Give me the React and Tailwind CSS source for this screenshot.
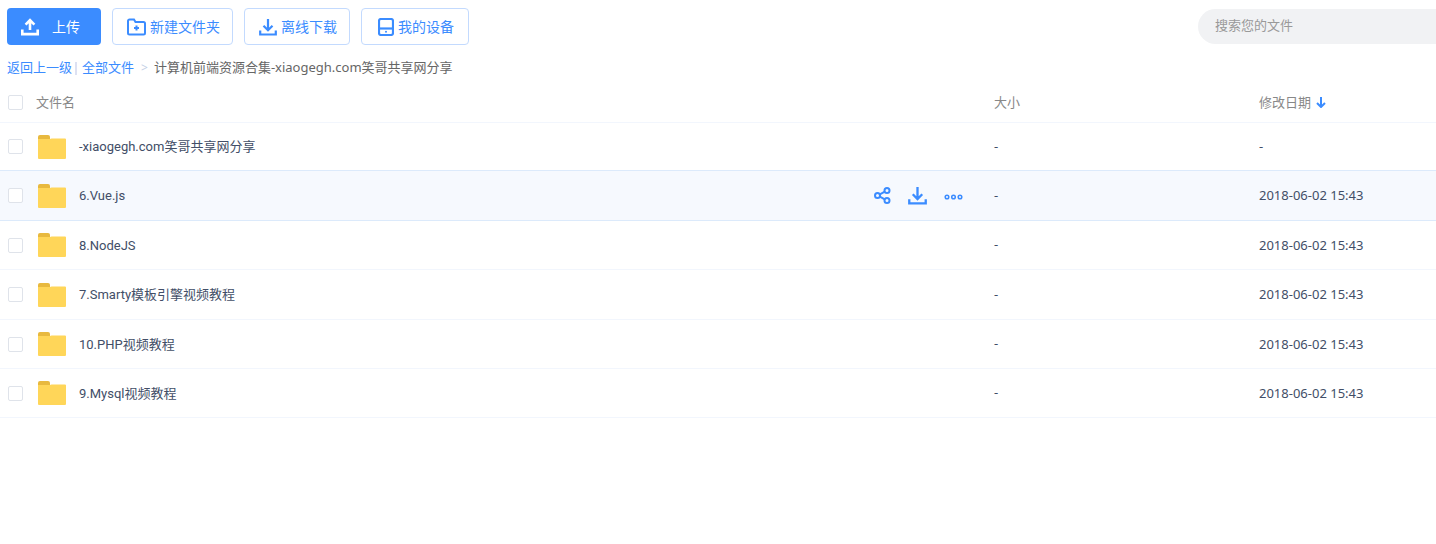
const fontStack = "font-['Noto_Sans','Noto_Sans_CJK_SC',sans-serif]";

const files = [
  { name: "-xiaogegh.com笑哥共享网分享", date: "-", height: "h-[48px]", border: "border-[#dceafb]" },
  { name: "6.Vue.js", date: "2018-06-02 15:43", height: "h-[50px]", border: "border-[#dceafb]", active: true },
  { name: "8.NodeJS", date: "2018-06-02 15:43", height: "h-[49px]", border: "border-[#f2f6fd]" },
  { name: "7.Smarty模板引擎视频教程", date: "2018-06-02 15:43", height: "h-[50px]", border: "border-[#f2f6fd]" },
  { name: "10.PHP视频教程", date: "2018-06-02 15:43", height: "h-[49px]", border: "border-[#f2f6fd]" },
  { name: "9.Mysql视频教程", date: "2018-06-02 15:43", height: "h-[49px]", border: "border-[#f2f6fd]" },
];

const UploadIcon = () => (
  <svg width="18" height="18" viewBox="0 0 18 18" fill="none" stroke="currentColor" strokeWidth="2.6">
    <path d="M9 12V2.5M4.6 6.6 9 2.2l4.4 4.4" />
    <path d="M1.3 11.5v4.6h15.4v-4.6" />
  </svg>
);

const FolderPlusIcon = () => (
  <svg width="19" height="18" viewBox="0 0 19 18" fill="none" stroke="currentColor" strokeWidth="2">
    <path d="M1 3a1.500 1.500 0 0 1 1.500-1.500H7L8.500 4h8A1.500 1.500 0 0 1 18 5.500V15a1.500 1.500 0 0 1-1.500 1.500h-14A1.500 1.500 0 0 1 1 15Z" />
    <path d="M9.500 7.500v5M7 10h5" />
  </svg>
);

const DownloadIcon = ({ size = 18 }) => (
  <svg width={size} height={size} viewBox="0 0 18 18" fill="none" stroke="currentColor" strokeWidth="2.2">
    <path d="M9 1v11M4.500 7.800 9 12.300l4.500-4.500" />
    <path d="M1.200 12.500v4h15.600v-4" />
  </svg>
);

const DeviceIcon = () => (
  <svg width="16" height="18" viewBox="0 0 16 18" fill="none" stroke="currentColor" strokeWidth="2.200">
    <rect x="1" y="1" width="14" height="16" rx="2" />
    <path d="M1 10.500h14" />
    <circle cx="8" cy="13.800" r="1" fill="currentColor" stroke="none" />
  </svg>
);

const ShareIcon = () => (
  <svg width="17" height="17" viewBox="0 0 17 17" fill="none" stroke="currentColor" strokeWidth="2">
    <circle cx="3.500" cy="8.500" r="2.500" />
    <circle cx="13" cy="3.500" r="2.500" />
    <circle cx="13" cy="13.500" r="2.500" />
    <path d="M5.800 7.300 10.800 4.600M5.800 9.700l5 2.700" />
  </svg>
);

const MoreIcon = () => (
  <svg width="19" height="6" viewBox="0 0 19 6" fill="none" stroke="currentColor" strokeWidth="1.500">
    <circle cx="3" cy="3" r="1.800" />
    <circle cx="9.500" cy="3" r="1.800" />
    <circle cx="16" cy="3" r="1.800" />
  </svg>
);

const FolderIcon = () => (
  <svg width="28" height="24" viewBox="0 0 28 24">
    <path d="M0 2a2 2 0 0 1 2-2h8a2 2 0 0 1 2 2v2H0Z" fill="#e8b93f" />
    <path d="M0 4h12l1.500-.500H27a1 1 0 0 1 1 1V23a1 1 0 0 1-1 1H1a1 1 0 0 1-1-1Z" fill="#ffd659" />
  </svg>
);

const Checkbox = () => (
  <span className="block w-[15px] h-[15px] rounded-[2px] border border-[#dfe3ea] bg-white shrink-0" />
);

const ToolButton = ({ icon, label, width }) => (
  <button className={`${width} h-[37px] pl-[2px] flex items-center justify-center gap-[4px] rounded-[4px] border border-[#c3dafe] bg-white text-[14px] text-[#3b8cff]`}>
    {icon}
    <span>{label}</span>
  </button>
);

export default function App() {
  return (
    <div className={`${fontStack} w-[1436px] h-[544px] bg-white overflow-hidden`}>
      {/* toolbar */}
      <div className="h-[53px] pl-[7px] pt-[8px] flex items-start gap-[11px]">
        <button className="w-[94px] h-[37px] pr-[7px] flex items-center justify-center gap-[13px] rounded-[4px] bg-[#3b8cff] text-white text-[14px]">
          <UploadIcon />
          <span>上传</span>
        </button>
        <ToolButton icon={<FolderPlusIcon />} label="新建文件夹" width="w-[121px]" />
        <ToolButton icon={<DownloadIcon />} label="离线下载" width="w-[106px]" />
        <ToolButton icon={<DeviceIcon />} label="我的设备" width="w-[108px]" />
        <div className="ml-auto mt-[1px] w-[238px] h-[35px] pb-[2px] rounded-l-[18px] bg-[#f1f2f4] pl-[17px] flex items-center text-[13px] text-[#999999]">
          搜索您的文件
        </div>
      </div>

      {/* breadcrumb */}
      <div className="h-[29px] pl-[7px] pt-[1px] flex items-center text-[13px] text-[#666666]">
        <span className="text-[#3b8cff]">返回上一级</span>
        <span className="ml-[3px] mr-[5px] w-[2px] h-[13px] bg-[#dde1f2]" />
        <span className="text-[#3b8cff]">全部文件</span>
        <span className="ml-[7px] mr-[6px] text-[#c4d0e6] text-[12px]">&gt;</span>
        <span>计算机前端资源合集-xiaogegh.com笑哥共享网分享</span>
      </div>

      {/* header */}
      <div className="h-[41px] flex items-center border-b border-[#f2f6fd] text-[13px] text-[#888888]">
        <div className="w-[36px] pl-[8px]"><Checkbox /></div>
        <div className="w-[958px] pt-[1px]">文件名</div>
        <div className="w-[265px] pt-[1px]">大小</div>
        <div className="flex items-center gap-[5px] pt-[1px]">
          修改日期
          <svg width="10" height="11" viewBox="0 0 10 11" fill="none" stroke="#3b8cff" strokeWidth="2">
            <path d="M5 0v9.500M1 6l4 4 4-4" />
          </svg>
        </div>
      </div>

      {/* rows */}
      {files.map((file) => (
        <div
          key={file.name}
          className={`${file.height} ${file.border} ${file.active ? "bg-[#f6f9fe]" : ""} flex items-center border-b text-[#424e67] text-[13px]`}
        >
          <div className="w-[38px] pl-[8px]"><Checkbox /></div>
          <FolderIcon />
          <div className="ml-[13px] w-[794px] pt-[1px] font-['Roboto','Noto_Sans_CJK_SC',sans-serif]">{file.name}</div>
          <div className="w-[121px] pl-[1px] flex items-center gap-[17px] text-[#3b8cff]">
            {file.active && (
              <>
                <ShareIcon />
                <DownloadIcon size={19} />
                <span className="pt-[2px]"><MoreIcon /></span>
              </>
            )}
          </div>
          <div className="w-[265px]">-</div>
          <div className="pt-[1px]">{file.date}</div>
        </div>
      ))}
    </div>
  );
}
